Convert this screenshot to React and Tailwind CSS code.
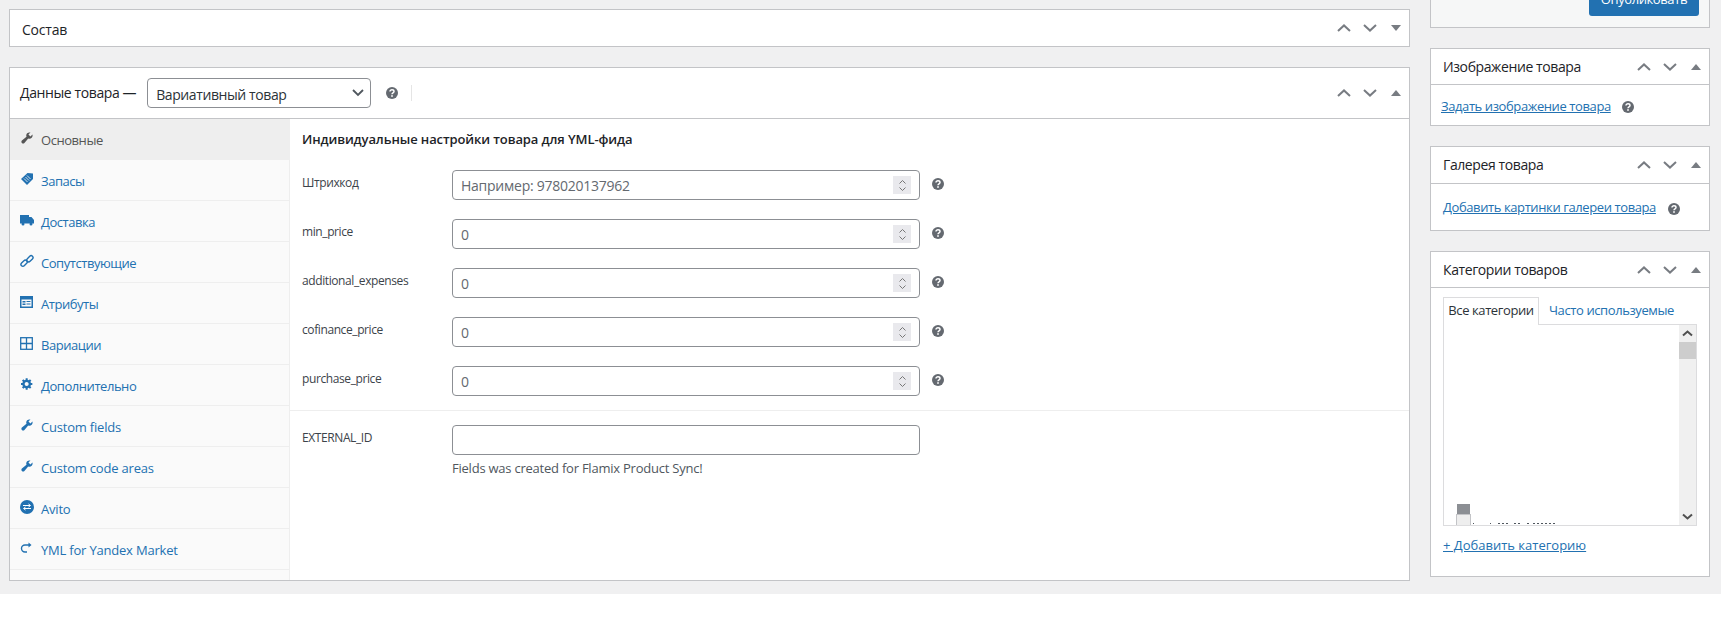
import React from 'react';

const Chevron = ({ dir }) => (
  <svg width="14" height="8" viewBox="0 0 14 8" className="shrink-0">
    <path d={dir === 'up' ? 'M1 7l6-5.6L13 7' : 'M1 1l6 5.6L13 1'} fill="none" stroke="#787c82" strokeWidth="2" />
  </svg>
);

const Triangle = ({ open }) => (
  <svg width="10" height="6" viewBox="0 0 10 6" className="shrink-0">
    <path d={open ? 'M0 6h10L5 0z' : 'M0 0h10L5 6z'} fill="#787c82" />
  </svg>
);

const Controls = ({ open = true }) => (
  <div className="flex items-center">
    <div className="flex w-[26px] justify-center"><Chevron dir="up" /></div>
    <div className="flex w-[26px] justify-center"><Chevron dir="down" /></div>
    <div className="flex w-[26px] justify-center"><Triangle open={open} /></div>
  </div>
);

const Help = ({ className = '' }) => (
  <svg width="12" height="12" viewBox="0 0 12 12" className={`shrink-0 ${className}`}>
    <circle cx="6" cy="6" r="6" fill="#646970" />
    <path d="M4 4.6c0-1.1.9-1.8 2-1.8s2 .7 2 1.7c0 1.500-2 1.400-2 2.800" fill="none" stroke="#fff" strokeWidth="1.500" />
    <rect x="5.200" y="8.200" width="1.600" height="1.600" fill="#fff" />
  </svg>
);

const Wrench = () => (
  <svg width="14" height="14" viewBox="0 0 20 20" fill="currentColor">
    <path d="M16.68 9.77c-1.34 1.34-3.3 1.67-4.95.99l-5.41 6.52c-.99.99-2.59.99-3.58 0s-.99-2.59 0-3.57l6.52-5.42c-.68-1.65-.35-3.61.99-4.95 1.28-1.28 3.12-1.62 4.72-1.06l-2.89 2.89 2.82 2.82 2.86-2.87c.53 1.58.18 3.39-1.08 4.67z" />
  </svg>
);

const TagIcon = () => (
  <svg width="14" height="14" viewBox="0 0 14 14" fill="currentColor">
    <path d="M7.500 1L13 1.500 13 7 7 13 1 7z" />
    <path d="M4 6.500l3.500 3.500M5.500 5l3.500 3.500M7 3.500l3.500 3.500" stroke="#fafafa" strokeWidth="0.800" fill="none" />
  </svg>
);

const Truck = () => (
  <svg width="14" height="12" viewBox="0 0 14 12" fill="currentColor">
    <path d="M0 1h9v2h2.500L14 6v3.500H0z" />
    <circle cx="3" cy="10" r="1.500" />
    <circle cx="11" cy="10" r="1.500" />
  </svg>
);

const LinkIcon = () => (
  <svg width="14" height="14" viewBox="0 0 14 14" fill="none" stroke="currentColor" strokeWidth="1.400">
    <rect x="0.500" y="7.300" width="7.200" height="3.800" rx="1.900" transform="rotate(-45 4.100 9.200)" />
    <rect x="6.300" y="2.900" width="7.200" height="3.800" rx="1.900" transform="rotate(-45 9.900 4.800)" />
  </svg>
);

const Attrs = () => (
  <svg width="13" height="12" viewBox="0 0 13 12">
    <rect width="13" height="12" fill="currentColor" />
    <rect x="1.500" y="3.500" width="10" height="7" fill="#fafafa" />
    <rect x="2.500" y="5" width="3" height="1.500" fill="currentColor" />
    <rect x="2.500" y="7.500" width="3" height="1.500" fill="currentColor" />
    <rect x="6.500" y="5" width="4" height="1" fill="currentColor" />
    <rect x="6.500" y="7.500" width="4" height="1" fill="currentColor" />
  </svg>
);

const GridIcon = () => (
  <svg width="13" height="13" viewBox="0 0 13 13" fill="none" stroke="currentColor" strokeWidth="1.300">
    <rect x="0.700" y="0.700" width="11.600" height="11.600" />
    <path d="M6.500 1v11M1 6.500h11" />
  </svg>
);

const Gear = () => (
  <svg width="12" height="12" viewBox="1 1.500 18 18" fill="currentColor">
    <path d="M18 12h-2.180c-.17.7-.44 1.350-.81 1.930l1.540 1.540-2.100 2.100-1.540-1.540c-.58.36-1.230.63-1.910.79V19H8v-2.180c-.68-.16-1.330-.43-1.910-.79l-1.540 1.540-2.120-2.120 1.540-1.540c-.36-.58-.63-1.230-.79-1.910H1V9.030h2.170c.16-.7.44-1.350.8-1.940L2.430 5.550l2.100-2.100 1.540 1.540c.58-.37 1.240-.64 1.930-.81V2h3v2.180c.68.16 1.330.43 1.910.79l1.540-1.540 2.120 2.120-1.540 1.540c.36.59.64 1.240.8 1.940H18V12zm-8.500 1.500c1.660 0 3-1.340 3-3s-1.340-3-3-3-3 1.340-3 3 1.340 3 3 3z" />
  </svg>
);

const Avito = () => (
  <svg width="14" height="14" viewBox="0 0 14 14">
    <circle cx="7" cy="7" r="7" fill="currentColor" />
    <path d="M3 5.500h7M8.500 4l2 1.500-2 1.500M11 8.500H4M5.500 7l-2 1.500 2 1.500" stroke="#fff" strokeWidth="1" fill="none" />
  </svg>
);

const Redo = () => (
  <svg width="13" height="12" viewBox="0 0 13 12" fill="none" stroke="currentColor" strokeWidth="1.400">
    <path d="M10 3H5a3.500 3.500 0 0 0 0 7h2" />
    <path d="M8.500 0.500L11.500 3 8.500 5.500z" fill="currentColor" stroke="none" />
  </svg>
);

const tabs = [
  { label: 'Основные', Icon: Wrench, active: true },
  { label: 'Запасы', Icon: TagIcon },
  { label: 'Доставка', Icon: Truck },
  { label: 'Сопутствующие', Icon: LinkIcon },
  { label: 'Атрибуты', Icon: Attrs },
  { label: 'Вариации', Icon: GridIcon },
  { label: 'Дополнительно', Icon: Gear },
  { label: 'Custom fields', Icon: Wrench, latin: true },
  { label: 'Custom code areas', Icon: Wrench, latin: true },
  { label: 'Avito', Icon: Avito, latin: true },
  { label: 'YML for Yandex Market', Icon: Redo, latin: true },
];

const fields = [
  { label: 'Штрихкод', placeholder: 'Например: 978020137962' },
  { label: 'min_price', placeholder: '0' },
  { label: 'additional_expenses', placeholder: '0' },
  { label: 'cofinance_price', placeholder: '0' },
  { label: 'purchase_price', placeholder: '0' },
];

const NumberField = ({ label, placeholder }) => (
  <div className="flex h-[30px] items-start">
    <label className="w-[150px] pt-[5px] text-[12px] leading-[16px] tracking-[-0.4px] text-[#3c434a]">{label}</label>
    <div className="relative">
      <input
        type="text"
        placeholder={placeholder}
        className="block h-[30px] w-[468px] rounded-[4px] border border-[#8c8f94] bg-white px-[8px] text-[14px] tracking-[-0.25px] placeholder:text-[#646970] outline-none"
      />
      <div className="absolute right-[9px] top-[6px] flex h-[18px] w-[18px] flex-col items-center justify-center gap-[3px] bg-[#e9e9ed]">
        <svg width="7" height="4" viewBox="0 0 7 4"><path d="M.5 3.500l3-3 3 3" fill="none" stroke="#777" /></svg>
        <svg width="7" height="4" viewBox="0 0 7 4"><path d="M.5.500l3 3 3-3" fill="none" stroke="#777" /></svg>
      </div>
    </div>
    <Help className="ml-[12px] mt-[8px]" />
  </div>
);

const SideBox = ({ title, headerH, children }) => (
  <section className="border border-[#c3c4c7] bg-white">
    <div className={`flex items-center justify-between border-b border-[#c3c4c7] pl-[12px] ${headerH}`}>
      <h2 className="text-[14px] font-medium tracking-[-0.4px] text-[#1d2327]">{title}</h2>
      <Controls />
    </div>
    {children}
  </section>
);

export default function App() {
  return (
    <div className="min-h-[626px] bg-white text-[13px] tracking-[-0.4px] text-[#3c434a] font-['Open_Sans','Noto_Sans',sans-serif]">
      <div className="flex h-[594px] gap-[20px] overflow-hidden bg-[#f0f0f1] pl-[9px]">
        <div className="w-[1401px] shrink-0 pt-[9px]">
          <section className="flex h-[38px] items-center justify-between border border-[#c3c4c7] bg-white pl-[12px]">
            <h2 className="pt-[2px] text-[14px] tracking-[-0.2px] text-[#1d2327]">Состав</h2>
            <Controls open={false} />
          </section>

          <section className="mt-[20px] border border-[#c3c4c7] bg-white">
            <div className="flex h-[51px] items-center justify-between border-b border-[#c3c4c7] pl-[10px]">
              <div className="flex items-center">
                <h2 className="-mt-[2px] text-[14px] font-medium tracking-[-0.4px] text-[#1d2327]">Данные товара —</h2>
                <div className="relative ml-[11px] flex h-[30px] w-[224px] items-center rounded-[4px] border border-[#8c8f94] pl-[8px] pt-[2px] text-[14px] text-[#2c3338]">
                  Вариативный товар
                  <svg width="12" height="8" viewBox="0 0 12 8" className="absolute right-[6px] top-[10px]">
                    <path d="M1 1l5 5 5-5" fill="none" stroke="#50575e" strokeWidth="1.800" />
                  </svg>
                </div>
                <Help className="ml-[15px]" />
                <div className="ml-[13px] h-[16px] w-px bg-[#e5e5e5]" />
              </div>
              <Controls />
            </div>

            <div className="flex">
              <ul className="w-[280px] shrink-0 border-r border-[#eee] bg-[#fafafa] pb-[10px]">
                {tabs.map(({ label, Icon, active, latin }) => (
                  <li
                    key={label}
                    className={`flex h-[41px] items-center border-b ${active ? 'border-[#eee] bg-[#eee] text-[#555]' : 'border-[#eee] text-[#2271b1]'}`}
                  >
                    <span className="-mt-[2px] flex w-[27px] justify-center pl-[6px]"><Icon /></span>
                    <span className={`ml-[4px] pt-[4px] ${latin ? 'tracking-[-0.2px]' : 'tracking-[-0.45px]'}`}>{label}</span>
                  </li>
                ))}
              </ul>

              <div className="flex-1">
                <h3 className="pl-[12px] pt-[11px] text-[13px] font-semibold leading-[18px] tracking-[-0.1px] text-[#1d2327]">
                  Индивидуальные настройки товара для YML-фида
                </h3>
                <div className="mt-[22px] flex flex-col gap-[19px] pl-[12px]">
                  {fields.map((f) => (
                    <NumberField key={f.label} {...f} />
                  ))}
                </div>
                <div className="mt-[14px] border-t border-[#eee] pl-[12px] pt-[14px]">
                  <div className="flex items-start">
                    <label className="w-[150px] pt-[5px] text-[12px] leading-[16px] tracking-[-0.4px] text-[#3c434a]">EXTERNAL_ID</label>
                    <div>
                      <input type="text" className="block h-[30px] w-[468px] rounded-[4px] border border-[#8c8f94] bg-white outline-none" />
                      <p className="mt-[4px] text-[13px] leading-[18px] tracking-[-0.23px] text-[#50575e]">Fields was created for Flamix Product Sync!</p>
                    </div>
                  </div>
                </div>
              </div>
            </div>
          </section>
        </div>

        <div className="flex w-[280px] shrink-0 flex-col gap-[20px]">
          <div className="flex h-[28px] items-end justify-end overflow-hidden border-x border-b border-[#c3c4c7] bg-[#f6f7f7] pb-[11px] pr-[10px]">
            <button type="button" className="h-[32px] w-[110px] shrink-0 rounded-[3px] bg-[#2271b1] text-[13px] text-white">
              Опубликовать
            </button>
          </div>

          <SideBox title="Изображение товара" headerH="h-[36px]">
            <div className="flex h-[40px] items-center pl-[10px] pt-[4px]">
              <a className="text-[#2271b1] underline">Задать изображение товара</a>
              <Help className="ml-[11px]" />
            </div>
          </SideBox>

          <SideBox title="Галерея товара" headerH="h-[37px] pb-[1px]">
            <div className="flex h-[46px] items-center pl-[12px] pt-[2px]">
              <a className="text-[#2271b1] underline">Добавить картинки галереи товара</a>
              <Help className="ml-[12px] mt-[1px]" />
            </div>
          </SideBox>

          <SideBox title="Категории товаров" headerH="h-[36px]">
            <div className="h-[288px] px-[12px] pt-[9px]">
              <div className="flex h-[27px]">
                <div className="relative z-10 flex h-[28px] w-[96px] items-center justify-center border-x border-t border-[#dcdcde] bg-white pb-[2px] text-[#2c3338]">
                  Все категории
                </div>
                <div className="flex items-center pl-[10px] text-[#2271b1]">Часто используемые</div>
              </div>
              <div className="flex h-[202px] w-[254px] border border-[#dcdcde]">
                <div className="flex flex-1 items-end overflow-hidden pl-[13px]">
                  <div className="flex flex-col">
                    <div className="h-[10px] w-[13px] bg-[#8c8f94]" />
                    <div className="-ml-px h-[11px] w-[15px] border-x border-t border-[#c3c4c7] bg-[#eee]" />
                  </div>
                  <svg width="86" height="2" viewBox="0 0 86 2" className="ml-[2px]">
                    <path d="M0 0h1M17 0h1M25 0h2M29 0h2M33 0h2M41 0h2M45 0h2M54 0h2M60 0h2M64 0h2M68 0h2M72 0h2M76 0h2M80 0h2" stroke="#50575e" strokeWidth="2" />
                  </svg>
                </div>
                <div className="flex w-[17px] flex-col items-center bg-[#f0f0f0]">
                  <svg width="17" height="17" viewBox="0 0 17 17" className="shrink-0"><path d="M4 10.500l4.500-4 4.500 4" fill="none" stroke="#505050" strokeWidth="2" /></svg>
                  <div className="h-[17px] w-[17px] bg-[#cdcdcd]" />
                  <svg width="17" height="17" viewBox="0 0 17 17" className="mt-auto shrink-0"><path d="M4 6.500l4.500 4 4.500-4" fill="none" stroke="#505050" strokeWidth="2" /></svg>
                </div>
              </div>
              <a className="mt-[10px] block tracking-normal text-[#2271b1] underline">+ Добавить категорию</a>
            </div>
          </SideBox>
        </div>
      </div>
    </div>
  );
}
